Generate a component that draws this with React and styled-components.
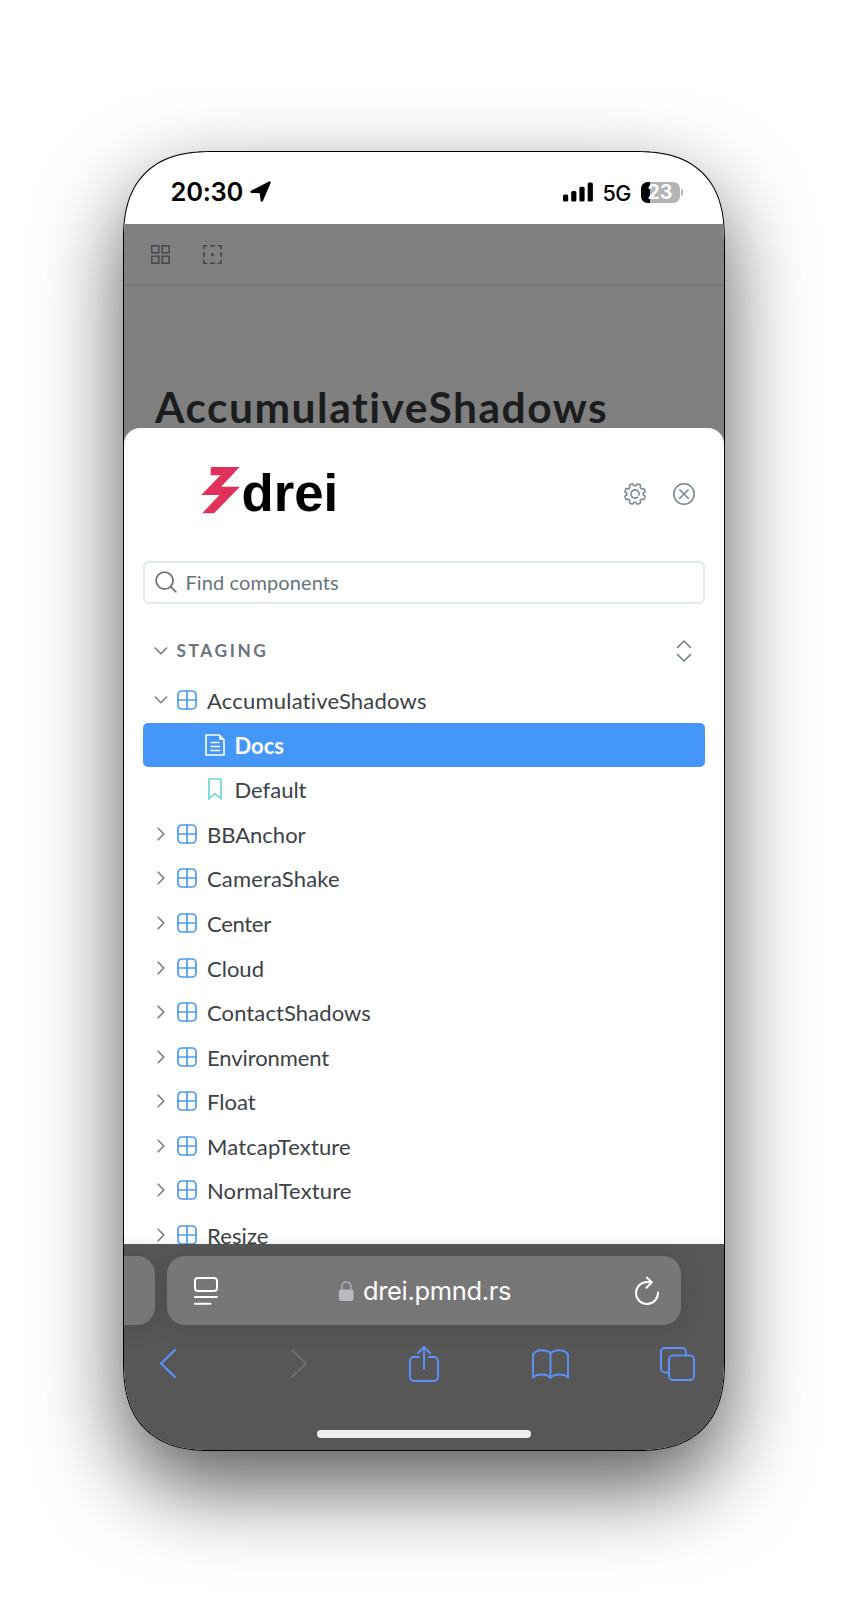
import React from 'react';
import styled, { createGlobalStyle, css } from 'styled-components';

const GlobalStyle = createGlobalStyle`
  * { box-sizing: border-box; }
  body { margin: 0; background: #fff; font-variant-ligatures: none; }
  svg { display: block; flex: none; overflow: visible; }
`;

const system = css`font-family: Inter, "Liberation Sans", sans-serif;`;
const storybook = css`font-family: Lato, "Open Sans", sans-serif;`;

const Stage = styled.main`
  width: 848px;
  height: 1610px;
  padding: 151px 123px 0;
  overflow: hidden;
`;

const Phone = styled.div`
  width: 602px;
  height: 1300px;
  display: flex;
  flex-direction: column;
  border: 1px solid #000;
  border-radius: 74px;
  overflow: hidden;
  background: #fff;
  box-shadow: 0 36px 86px rgba(0, 0, 0, 0.65);

  @supports (corner-shape: superellipse(1.32)) {
    border-radius: 90px;
    corner-shape: superellipse(1.32);
  }
`;

const StatusBar = styled.header`
  ${system}
  height: 72px;
  flex: none;
  display: flex;
  align-items: flex-start;
  padding: 29px 41px 0 46.5px;
  color: #000;
`;

const Clock = styled.span`
  width: 79.5px;
  font-size: 25.5px;
  line-height: 21px;
  font-weight: 600;
  letter-spacing: ${(p) => p.$track}px;
  white-space: nowrap;
`;

const StatusRight = styled.div`
  margin-left: auto;
  display: flex;
  height: 22px;
  align-items: center;
`;

const Network = styled.span`
  width: 38px;
  margin: 1px 0 0 9px;
  font-size: 21.5px;
  line-height: 22px;
  font-weight: 500;
  letter-spacing: -0.6px;
`;

const Battery = styled.span`
  width: 39px;
  height: 21px;
  border-radius: 6.5px;
  background: linear-gradient(90deg, #000 9px, #b4b4b4 9px);
  color: #fff;
  font-size: 19.5px;
  line-height: 21px;
  font-weight: 700;
  text-align: center;
`;

const BatteryCap = styled.span`
  width: 2px;
  height: 7px;
  margin-left: 1.5px;
  border-radius: 0 3px 3px 0;
  background: #b4b4b4;
`;

const Page = styled.section`
  ${storybook}
  height: 1020px;
  flex: none;
  display: flex;
  flex-direction: column;
  background: #808080;
  overflow: hidden;
`;

const Toolbar = styled.div`
  height: 62px;
  flex: none;
  display: flex;
  gap: 33px;
  padding: 21px 0 0 27px;
  border-bottom: 2px solid #757575;
  color: #42494f;
`;

const Title = styled.h1`
  height: 142px;
  flex: none;
  margin: 0;
  padding: 100px 0 0 31px;
  font-size: 42.5px;
  line-height: 42px;
  font-weight: 700;
  letter-spacing: ${(p) => p.$track}px;
  color: #1b1d1f;
  white-space: nowrap;
`;

const Sheet = styled.div`
  flex: 1;
  min-height: 0;
  display: flex;
  flex-direction: column;
  padding: 0 19px;
  border-radius: 16px 16px 0 0;
  background: linear-gradient(0deg, #f7f7f7 0, #fff 10px);
  overflow: hidden;
`;

const Brand = styled.div`
  height: 133px;
  flex: none;
  display: flex;
  align-items: flex-start;
  padding: 39px 10px 0 57.5px;
  color: #7c8894;
`;

const BrandName = styled.span`
  margin: 0 auto 0 -1px;
  font-family: "Liberation Sans", Arial, sans-serif;
  font-size: 52.7px;
  line-height: 52px;
  font-weight: 700;
  color: #000;
`;

const Actions = styled.div`
  display: flex;
  gap: 27px;
  padding-top: 16px;
`;

const Search = styled.div`
  height: 43px;
  flex: none;
  display: flex;
  align-items: center;
  gap: 9px;
  padding: 0 0 1.5px 9.5px;
  border: 2px solid #e0eaf3;
  border-radius: 6px;
  color: #69727b;
  font-size: 20px;
  line-height: 24px;
  letter-spacing: ${(p) => p.$track}px;
`;

const SectionHead = styled.div`
  height: 74px;
  flex: none;
  display: flex;
  align-items: center;
  padding: 20px 13px 0 10.5px;
  color: #727e8a;
`;

const SectionName = styled.span`
  margin: 0 auto 0 10px;
  font-size: 17.3px;
  line-height: 20px;
  font-weight: 700;
  color: #69747f;
  letter-spacing: ${(p) => p.$track}px;
`;

const Row = styled.div`
  height: 44.55px;
  flex: none;
  display: flex;
  align-items: center;
  padding-left: ${(p) => (p.$nested ? 61.5 : 10.5)}px;
  border-radius: 5px;
  background: ${(p) => (p.$active ? '#4497f8' : 'transparent')};
  color: ${(p) => (p.$active ? '#fff' : '#3c4147')};
  font-weight: ${(p) => (p.$active ? 700 : 400)};
`;

const Label = styled.span`
  margin: 2px 0 0 10px;
  font-size: 22px;
  line-height: 28px;
  letter-spacing: ${(p) => p.$track}px;
  white-space: nowrap;
`;

const Twisty = styled.span`
  width: 23.5px;
  flex: none;
  display: flex;
  color: #727e8a;
`;

const Browser = styled.footer`
  ${system}
  flex: 1;
  display: flex;
  flex-direction: column;
  align-items: center;
  background: #575757;
`;

const AddressRow = styled.div`
  align-self: stretch;
  display: flex;
  gap: 12px;
  padding-top: 12px;
`;

const Pill = styled.div`
  width: ${(p) => p.$width}px;
  height: 69px;
  display: flex;
  align-items: center;
  justify-content: space-between;
  padding: ${(p) => (p.$previous ? 0 : '0 22px 0 27px')};
  border-radius: ${(p) => (p.$previous ? '0 18px 18px 0' : '18px')};
  background: #777;
  box-shadow: 0 2px 24px rgba(0, 0, 0, 0.13);
  color: #fff;
`;

const Address = styled.span`
  display: flex;
  align-items: center;
  gap: 9px;
  margin-right: 3px;
  font-size: 25.5px;
  line-height: 32px;
  letter-spacing: ${(p) => p.$track}px;
`;

const Navigation = styled.nav`
  align-self: stretch;
  height: 77px;
  display: flex;
  align-items: center;
  justify-content: space-between;
  padding: 0 28px 0 25px;
  color: #5b90f7;
`;

const NavSlot = styled.span`
  width: 37px;
  display: flex;
  justify-content: center;
  padding-left: ${(p) => p.$inset || 0}px;
`;

const HomeBar = styled.div`
  width: 214px;
  height: 8.5px;
  margin-top: 27.5px;
  border-radius: 5px;
  background: #eee;
`;

function Svg({ w, h, stroke = 1.6, children, ...rest }) {
  return (
    <svg width={w} height={h} viewBox={`0 0 ${w} ${h}`} fill="none" stroke="currentColor"
      strokeWidth={stroke} strokeLinecap="round" strokeLinejoin="round" {...rest}>
      {children}
    </svg>
  );
}

const ChevronRight = () => (
  <Svg w={12} h={14}><path d="M4.2 1.2 9.8 7l-5.600 5.800" /></Svg>
);
const ChevronDown = () => (
  <Svg w={13} h={14}><path d="M1.200 4 6.900 9.700 12.600 4" /></Svg>
);
const ComponentIcon = () => (
  <Svg w={20} h={20} stroke={1.7} color="#4a9cf6">
    <rect x="1" y="1" width="18" height="18" rx="3.8" />
    <path d="M10 1v18M1 10h18" />
  </Svg>
);
const DocIcon = () => (
  <Svg w={20} h={22} stroke={1.6}>
    <path d="M1 1h13.200L19 5.800V21H1z" strokeLinejoin="miter" />
    <path d="M14.200 1v4.800H19z" fill="currentColor" stroke="none" />
    <path d="M6 8.500h8M6 12.500h8.500M6 16.500h8.500" />
  </Svg>
);
const BookmarkIcon = () => (
  <Svg w={20} h={22} stroke={1.7} color="#74d8d5">
    <path d="M4 1h12v19.600l-6-5-6 5z" strokeLinejoin="miter" />
  </Svg>
);

function gearPath() {
  const pts = [];
  for (let i = 0; i <= 160; i++) {
    const a = (i / 160) * Math.PI * 2;
    const wave = Math.tanh(2.6 * (Math.cos(8 * (a - Math.PI / 8)) + 0.25));
    const r = 9.3 + wave * 1.15;
    pts.push(`${(11 + r * Math.cos(a)).toFixed(2)} ${(11 + r * Math.sin(a)).toFixed(2)}`);
  }
  return `M${pts.join('L')}Z`;
}
const Gear = () => (
  <Svg w={22} h={22}>
    <path d={gearPath()} />
    <path d="M13.600 14.200A4.100 4.100 0 1 1 15 12.100" />
  </Svg>
);
const Close = () => (
  <Svg w={22} h={22}><circle cx="11" cy="11" r="10.2" /><path d="m6.800 6.800 8.400 8.400M15.200 6.800l-8.400 8.400" /></Svg>
);
const Bolt = () => (
  <svg width="42" height="47" viewBox="0 0 42 47" fill="#df3159">
    <path d="M9.700 0h29L20 19.700h19L13 46.300H1.200L18.500 28H.2L19.500 8.300H9.700z" />
  </svg>
);

const items = [
  { name: 'AccumulativeShadows', open: true, track: 0.2 },
  { name: 'Docs', kind: 'doc', track: 0 },
  { name: 'Default', kind: 'story', track: 0 },
  { name: 'BBAnchor', track: 0 },
  { name: 'CameraShake', track: 0.15 },
  { name: 'Center', track: -0.3 },
  { name: 'Cloud', track: 0 },
  { name: 'ContactShadows', track: 0.1 },
  { name: 'Environment', track: -0.1 },
  { name: 'Float', track: 0 },
  { name: 'MatcapTexture', track: 0.15 },
  { name: 'NormalTexture', track: 0.12 },
  { name: 'Resize', track: 0.1 },
];

function TreeItem({ name, kind, open, track }) {
  return (
    <Row $nested={!!kind} $active={kind === 'doc'}>
      {!kind && <Twisty>{open ? <ChevronDown /> : <ChevronRight />}</Twisty>}
      {kind === 'doc' ? <DocIcon /> : kind === 'story' ? <BookmarkIcon /> : <ComponentIcon />}
      <Label $track={track}>{name}</Label>
    </Row>
  );
}

export default function App() {
  return (
    <Stage>
      <GlobalStyle />
      <Phone>
        <StatusBar>
          <Clock $track={-0.25}>20:30</Clock>
          <svg width="21" height="21" viewBox="0 0 21 21" fill="#000" stroke="#000" strokeLinejoin="round">
            <path d="M1.500 10.800 19.500 1.500 11.800 19.500 10.800 11z" strokeWidth="2.4" />
          </svg>
          <StatusRight>
            <svg width="31" height="20" viewBox="0 0 31 20" fill="#000">
              <rect x="0" y="12.5" width="5.2" height="7" rx="1.5" />
              <rect x="8.2" y="9" width="5.2" height="10.5" rx="1.5" />
              <rect x="16.4" y="4.7" width="5.2" height="14.8" rx="1.5" />
              <rect x="24.7" y="0.5" width="5.2" height="19" rx="1.5" />
            </svg>
            <Network>5G</Network>
            <Battery>23</Battery>
            <BatteryCap />
          </StatusRight>
        </StatusBar>
        <Page>
          <Toolbar>
            <Svg w={19} h={19} stroke={1.5} strokeLinejoin="miter">
              <path d="M.8.8h7v7h-7zM11.2.8h7v7h-7zM.8 11.2h7v7h-7zM11.2 11.2h7v7h-7z" />
            </Svg>
            <Svg w={19} h={19} stroke={1.6} strokeLinecap="butt">
              <path d="M.8 4.200V.8H4.200M14.800.8h3.400v3.400M18.200 14.800v3.400h-3.400M4.200 18.200H.8v-3.400M7 .8h5M7 18.200h5M.8 7v5M18.200 7v5" />
              <circle cx="9.5" cy="9.5" r="1.5" fill="currentColor" stroke="none" />
            </Svg>
          </Toolbar>
          <Title $track={1.5}>AccumulativeShadows</Title>
          <Sheet>
            <Brand>
              <Bolt />
              <BrandName>drei</BrandName>
              <Actions><Gear /><Close /></Actions>
            </Brand>
            <Search $track={0.1}>
              <Svg w={22} h={22} stroke={1.7}><circle cx="9.6" cy="9.6" r="8.5" /><path d="m15.700 15.700 5.200 5.200" /></Svg>
              Find components
            </Search>
            <SectionHead>
              <ChevronDown />
              <SectionName $track={2.6}>STAGING</SectionName>
              <Svg w={16} h={22}><path d="M1.500 7.500 8 1l6.500 6.500M1.500 14.500 8 21l6.500-6.500" /></Svg>
            </SectionHead>
            {items.map((item) => <TreeItem key={item.name} {...item} />)}
          </Sheet>
        </Page>
        <Browser>
          <AddressRow>
            <Pill $width={31} $previous />
            <Pill $width={514}>
              <Svg w={24} h={28} stroke={2}>
                <rect x="1" y="1" width="22" height="13" rx="3" />
                <path d="M1 20h22M1 26.800h15.500" />
              </Svg>
              <Address $track={-0.35}>
                <svg width="15" height="20" viewBox="0 0 15 20">
                  <rect x="0" y="8.5" width="14.5" height="11.5" rx="2" fill="#bab9c1" />
                  <path d="M2.800 9V5.500a4.500 4.700 0 0 1 9 0V9" fill="none" stroke="#a9a8ae" strokeWidth="1.7" />
                </svg>
                drei.pmnd.rs
              </Address>
              <Svg w={24} h={28} stroke={2}>
                <path d="M23 15.500A11 11 0 1 1 12 5h4.800M11.800.500l5 4.700-5.400 5.600" />
              </Svg>
            </Pill>
          </AddressRow>
          <Navigation>
            <NavSlot><Svg w={18} h={29} stroke={2.3}><path d="M16 1 2 14.500 16 28" /></Svg></NavSlot>
            <NavSlot $inset={7}><Svg w={18} h={29} stroke={2.3} color="#6b6b6b"><path d="M2 1l14 13.500L2 28" /></Svg></NavSlot>
            <NavSlot $inset={3}>
              <Svg w={30} h={36} stroke={2}>
                <path d="M10 11H5a4 4 0 0 0-4 4v16a4 4 0 0 0 4 4h20a4 4 0 0 0 4-4V15a4 4 0 0 0-4-4h-5M15 23V1M9 7l6-6 6 6" />
              </Svg>
            </NavSlot>
            <NavSlot>
              <Svg w={37} h={30} stroke={2}>
                <path d="M18.500 4.500C15 .2 4.500-.2 1 5.500V28.500c4-4 14-4 17.500.5 3.500-4.500 13.500-4.500 17.500-.5V5.500C32.500-.2 22 .2 18.500 4.500V29" />
              </Svg>
            </NavSlot>
            <NavSlot>
              <Svg w={35} h={34} stroke={2}>
                <rect x="9" y="8.5" width="25" height="24.5" rx="4" />
                <path d="M9 25.500H5a4 4 0 0 1-4-4V5a4 4 0 0 1 4-4h17a4 4 0 0 1 4 4v3.500" />
              </Svg>
            </NavSlot>
          </Navigation>
          <HomeBar />
        </Browser>
      </Phone>
    </Stage>
  );
}
